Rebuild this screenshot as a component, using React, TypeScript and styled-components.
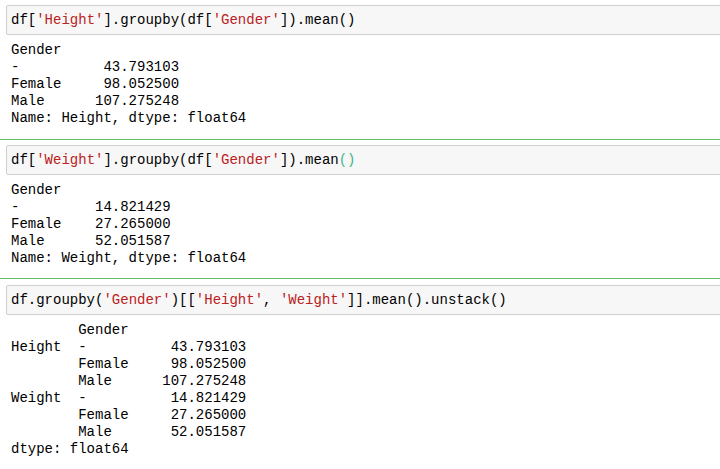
import React from "react";
import styled, { createGlobalStyle } from "styled-components";

const GlobalStyle = createGlobalStyle`
  html, body {
    margin: 0;
    padding: 0;
    background: #ffffff;
    overflow: hidden;
  }
`;

const Notebook = styled.div`
  width: 760px;
  margin-top: -1px;
  display: flex;
  flex-direction: column;
  font-family: "Liberation Mono", "Courier New", monospace;
  font-size: 14px;
  color: #000;
`;

const Cell = styled.div<{ $selected?: boolean }>`
  display: flex;
  flex-direction: column;
  padding: 5px 0 5px 6px;
  border-top: 1px solid ${(p) => (p.$selected ? "#66bb6a" : "transparent")};
  border-bottom: 1px solid ${(p) => (p.$selected ? "#66bb6a" : "transparent")};
`;

const InputArea = styled.div`
  height: 30px;
  box-sizing: border-box;
  background: #f7f7f7;
  border: 1px solid #cfcfcf;
  border-radius: 2px;
  padding: 6px 0 5px 4px;
`;

const CodeLine = styled.pre`
  margin: 0;
  font: inherit;
  line-height: 17px;
  white-space: pre;
  color: #000;
`;

const Str = styled.span`
  color: #ba2121;
`;

const Match = styled.span`
  color: #3db88a;
`;

const Output = styled.pre`
  margin: 0;
  padding: 7px 0 6px 5px;
  font: inherit;
  line-height: 17px;
  white-space: pre;
  color: #000;
`;

export default function App() {
  return (
    <>
      <GlobalStyle />
      <Notebook>
        <Cell>
          <InputArea>
            <CodeLine>
              df[<Str>'Height'</Str>].groupby(df[<Str>'Gender'</Str>]).mean()
            </CodeLine>
          </InputArea>
          <Output>{`Gender
-          43.793103
Female     98.052500
Male      107.275248
Name: Height, dtype: float64`}</Output>
        </Cell>
        <Cell $selected>
          <InputArea>
            <CodeLine>
              df[<Str>'Weight'</Str>].groupby(df[<Str>'Gender'</Str>]).mean
              <Match>()</Match>
            </CodeLine>
          </InputArea>
          <Output>{`Gender
-         14.821429
Female    27.265000
Male      52.051587
Name: Weight, dtype: float64`}</Output>
        </Cell>
        <Cell>
          <InputArea>
            <CodeLine>
              df.groupby(<Str>'Gender'</Str>)[[<Str>'Height'</Str>, <Str>'Weight'</Str>]].mean().unstack()
            </CodeLine>
          </InputArea>
          <Output>{`        Gender
Height  -          43.793103
        Female     98.052500
        Male      107.275248
Weight  -          14.821429
        Female     27.265000
        Male       52.051587
dtype: float64`}</Output>
        </Cell>
      </Notebook>
    </>
  );
}
